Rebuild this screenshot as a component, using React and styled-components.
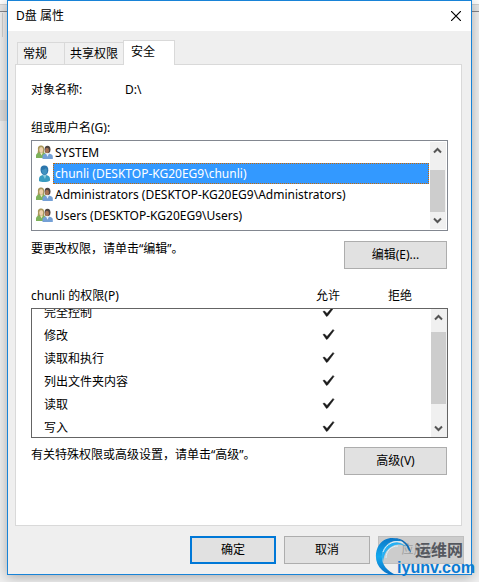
import styled, { createGlobalStyle, css } from "styled-components";

const GlobalStyle = createGlobalStyle`
  *, *::before, *::after {
    box-sizing: border-box;
  }
  body {
    margin: 0;
    background: #f0f0f0;
    color: #000;
    font-family: "Noto Sans", "Noto Sans CJK SC", sans-serif;
    font-size: 12px;
    line-height: 16px;
  }
  button {
    font: inherit;
    color: inherit;
  }
`;

const Desktop = styled.div`
  position: relative;
  padding: 0 7px 7px;
  background:
    linear-gradient(#dedede, #dedede) 0 100px / 7px 21px no-repeat,
    linear-gradient(#d0d0d0, #d0d0d0) 2px 13px / 1px 24px no-repeat,
    linear-gradient(#fff 0 4px, #d0d0d0 4px 5px, #e6e6e6 5px 11px, #84858a 11px 12px, #f0f0f0 12px);
`;

const Dialog = styled.main`
  position: relative;
  background: #efefef;
  border: 1px solid #1883d7;
  box-shadow: 0 2px 12px rgba(0, 0, 0, 0.3);
`;

const TitleBar = styled.header`
  display: flex;
  justify-content: space-between;
  align-items: center;
  height: 30px;
  padding: 0 8px;
  background: #fff;
`;

const Title = styled.h1`
  margin: 0;
  font-size: 12px;
  font-weight: 400;
`;

const CloseButton = styled.button`
  display: flex;
  width: 14px;
  height: 14px;
  padding: 2px;
  border: 0;
  background: none;
`;

const Tabs = styled.div`
  display: flex;
  align-items: flex-end;
  padding: 9px 9px 0;
`;

const Tab = styled.button`
  width: ${({ $width }) => $width}px;
  height: 22px;
  padding: 0 0 0 5px;
  border: 1px solid #d9d9d9;
  border-bottom: 0;
  border-right: 0;
  background: #f0f0f0;
  text-align: left;

  ${({ $active }) =>
    $active &&
    css`
      position: relative;
      z-index: 1;
      height: 25px;
      margin-bottom: -1px;
      padding: 0 0 2px 7px;
      border-right: 1px solid #d9d9d9;
      background: #fff;
    `}
`;

const Panel = styled.section`
  display: flex;
  flex-direction: column;
  margin: 0 9px 0 7px;
  padding: 17px 13px 50px 15px;
  border: 1px solid #d9d9d9;
  background: #fff;
`;

const ObjectLine = styled.p`
  display: flex;
  margin: 0 0 22px;
`;

const ObjectLabel = styled.span`
  width: 94px;
`;

const Label = styled.span`
  display: block;
  margin-bottom: 4px;
`;

const Box = styled.div`
  display: flex;
  overflow: hidden;
  height: ${({ $height }) => $height}px;
  padding: ${({ $inset }) => $inset || 0}px;
  border: 1px solid ${({ $color }) => $color};
`;

const UserList = styled.ul`
  flex: 1;
  margin: 0;
  padding: 0 1px 0 3px;
  list-style: none;
`;

const UserItem = styled.li`
  display: flex;
  align-items: center;
  height: 21px;
`;

const UserName = styled.span`
  flex: 1;
  height: 21px;
  padding: 2px 1px 1px;
  border: 1px solid transparent;
  white-space: nowrap;

  ${({ $selected }) =>
    $selected &&
    css`
      border: 1px dotted #cc6600;
      background: #3399ff;
      color: #fff;
    `}
`;

const IconSlot = styled.span`
  display: flex;
  width: 17px;
`;

const ScrollTrack = styled.div`
  display: flex;
  flex-direction: column;
  width: 16px;
  padding-right: 1px;
  background: #f0f0f0;
`;

const ScrollButton = styled.button`
  display: flex;
  justify-content: center;
  align-items: center;
  height: 17px;
  padding: 0;
  border: 0;
  background: none;
`;

const ScrollThumb = styled.div`
  height: ${({ $height }) => $height}px;
  margin: ${({ $before }) => $before}px 0 auto;
  background: #cdcdcd;
`;

const HintRow = styled.div`
  display: flex;
  justify-content: space-between;
  align-items: flex-start;
  padding-right: 1px;
`;

const EditRow = styled(HintRow)`
  margin: 10px 0 19px;
`;

const AdvancedRow = styled(HintRow)`
  margin-top: 9px;
`;

const PushButton = styled.button`
  width: ${({ $width }) => $width}px;
  height: 28px;
  padding: 0;
  border: 1px solid #adadad;
  background: #e1e1e1;

  ${({ $primary }) =>
    $primary &&
    css`
      border: 2px solid #0078d7;
    `}

  &:disabled {
    border-color: #bfbfbf;
    background: #cccccc;
    color: #a0a0a0;
  }
`;

const PermissionHead = styled.div`
  display: grid;
  grid-template-columns: 1fr 72px 72px 12px;
  margin-bottom: 4px;
  text-align: center;

  & > :first-child {
    text-align: left;
  }
`;

const PermissionTable = styled.table`
  flex: 1;
  align-self: flex-start;
  margin-top: -8px;
  border-collapse: collapse;
  table-layout: fixed;
`;

const PermissionName = styled.th`
  height: 23px;
  padding: 0 0 0 12px;
  font-weight: 400;
  text-align: left;
`;

const PermissionCell = styled.td`
  width: ${({ $width }) => $width}px;
  padding: 0 0 2px;
  text-align: center;

  svg {
    display: block;
    margin: 0 auto;
  }
`;

const Footer = styled.footer`
  display: flex;
  justify-content: flex-end;
  gap: 8px;
  padding: 10px 7px;
`;

const Watermark = styled.div`
  position: absolute;
  right: 4px;
  bottom: 6px;
  display: flex;
  pointer-events: none;
`;

const WatermarkText = styled.div`
  display: flex;
  flex-direction: column;
  margin-left: -18px;
  padding-top: 6px;
  font-family: "Liberation Sans", "Noto Sans CJK SC", sans-serif;
  font-size: 16px;
  line-height: 17px;
  font-weight: 700;
`;

const WatermarkName = styled.span`
  padding-left: 18px;
  color: #55585f;
`;

const WatermarkSite = styled.span`
  color: #0a7bd3;
`;

const GroupIcon = () => (
  <svg width="17" height="16" viewBox="0 0 17 16" aria-hidden="true">
    <path d="M2 5C1.500 1.500 3 .5 5 .5S8.500 1.500 8 5l.5 3.500h-7z" fill="#a8975a" />
    <ellipse cx="5.200" cy="4.700" rx="2" ry="2.700" fill="#ecd0aa" />
    <path d="M0 13V10.500C0 8.500 2 8 4 7.600l1.500 1 1.500-1c2 .4 3 1.200 3 3V13z" fill="#7db15a" />
    <path d="M4 7.600l1.500 3 1.500-3z" fill="#f3dfc0" />
    <ellipse cx="11.500" cy="4.500" rx="3" ry="3.800" fill="#4c4340" />
    <ellipse cx="11" cy="5.400" rx="2" ry="2.700" fill="#a87354" />
    <path d="M6.500 14v-2.500C6.500 9.500 8 9 10 8.500l1.500 1.200L13 8.500c2 .5 3.800 1.200 3.800 3V14z" fill="#74a0d6" />
    <path d="M10 8.500l1.500 3.300L13 8.500z" fill="#e8f1fb" />
  </svg>
);

const UserIcon = () => (
  <svg width="17" height="18" viewBox="0 0 17 18" aria-hidden="true">
    <path d="M3 16v-2c0-2.500 1.500-3.500 4-4h3c2.500.5 4 1.500 4 4v1.500C12 17.500 5 17.500 3 16z" fill="#3a9cc0" />
    <path d="M6.500 9.500h4L9 14z" fill="#8fcbdd" />
    <path d="M4.500 5C4.500 1.500 6 .5 8.500.5S12.500 2 12.300 5.500C12 8.500 10.500 10 8.500 10S4.800 8.500 4.500 5z" fill="#2b75ac" />
    <path d="M5.500 5C7 5 9 4 10 3c1 1 1.500 4 .5 5.500-1 1.500-3 1.500-4 0z" fill="#4192c0" />
  </svg>
);

const Chevron = ({ down }) => (
  <svg width="9" height="7" viewBox="0 0 9 7" aria-hidden="true">
    <path d={down ? "M1 1.500L4.500 5 8 1.500" : "M1 5.500L4.500 2 8 5.500"} fill="none" stroke="#555" strokeWidth="2" />
  </svg>
);

const Check = () => (
  <svg width="13" height="13" viewBox="0 0 13 13" role="img" aria-label="允许">
    <path d="M1 6.500L2.500 6 5 8.500 11 1.500 12 2.500 5.800 10.800 4.500 11.500z" fill="#1a1a1a" stroke="#1a1a1a" strokeWidth="0.500" strokeLinejoin="round" />
  </svg>
);

const Swirl = () => (
  <svg width="40" height="40" viewBox="0 0 40 40" aria-hidden="true">
    <defs>
      <linearGradient id="swirl" x1="0" y1="0" x2="0" y2="1">
        <stop offset="0" stopColor="#0a78c8" />
        <stop offset="0.500" stopColor="#13a9ee" />
        <stop offset="1" stopColor="#0a70c4" />
      </linearGradient>
    </defs>
    <path d="M27 5C20 0 9 1 4 9-1 17 0 28 7 34c4 4 9 5.500 14 5C12 35 6 28 7 19 8 11 13 6 20 5c3 0 5 0 7 0z" fill="url(#swirl)" />
    <path d="M36 17C35 8 28 2 18 2c7 1 13 5 15 11z" fill="#0b6cb8" />
    <path d="M33 13C28 6 19 4 12 9c-5 4-6 11-4 17C9 19 11 14 16 11c6-4 13-3 17 2z" fill="#27b0f3" />
    <path d="M11 22c0-7 5-12 12-12" fill="none" stroke="#d8f1fd" />
    <path d="M8 16C11 8 20 3 28 7" fill="none" stroke="#d8f1fd" />
  </svg>
);

const users = [
  { name: "SYSTEM", group: true },
  { name: "chunli (DESKTOP-KG20EG9\\chunli)", selected: true },
  { name: "Administrators (DESKTOP-KG20EG9\\Administrators)", group: true },
  { name: "Users (DESKTOP-KG20EG9\\Users)", group: true },
];

const permissions = ["完全控制", "修改", "读取和执行", "列出文件夹内容", "读取", "写入"];

const Scrollbar = ({ before, height }) => (
  <ScrollTrack>
    <ScrollButton aria-label="向上滚动">
      <Chevron />
    </ScrollButton>
    <ScrollThumb $before={before} $height={height} />
    <ScrollButton aria-label="向下滚动">
      <Chevron down />
    </ScrollButton>
  </ScrollTrack>
);

const App = () => {
  return (
    <>
      <GlobalStyle />
      <Desktop>
        <Dialog>
          <TitleBar>
            <Title>D盘 属性</Title>
            <CloseButton aria-label="关闭">
              <svg width="10" height="10" viewBox="0 0 10 10">
                <path d="M0 0L10 10M10 0L0 10" stroke="#000" strokeWidth="1.200" />
              </svg>
            </CloseButton>
          </TitleBar>
          <Tabs role="tablist">
            <Tab role="tab" $width={47}>常规</Tab>
            <Tab role="tab" $width={59}>共享权限</Tab>
            <Tab role="tab" aria-selected="true" $width={52} $active>安全</Tab>
          </Tabs>
          <Panel>
            <ObjectLine>
              <ObjectLabel>对象名称:</ObjectLabel>
              <span>D:\</span>
            </ObjectLine>

            <Label id="users-label">组或用户名(G):</Label>
            <Box $height={91} $inset={1} $color="#828790">
              <UserList role="listbox" aria-labelledby="users-label">
                {users.map((user) => (
                  <UserItem key={user.name} role="option" aria-selected={!!user.selected}>
                    <IconSlot>{user.group ? <GroupIcon /> : <UserIcon />}</IconSlot>
                    <UserName $selected={user.selected}>{user.name}</UserName>
                  </UserItem>
                ))}
              </UserList>
              <Scrollbar before={11} height={42} />
            </Box>
            <EditRow>
              <span>要更改权限，请单击“编辑”。</span>
              <PushButton $width={103}>编辑(E)...</PushButton>
            </EditRow>

            <PermissionHead>
              <span id="permissions-label">chunli 的权限(P)</span>
              <span>允许</span>
              <span>拒绝</span>
            </PermissionHead>
            <Box $height={130} $color="#646464">
              <PermissionTable aria-labelledby="permissions-label">
                <tbody>
                  {permissions.map((name) => (
                    <tr key={name}>
                      <PermissionName scope="row">{name}</PermissionName>
                      <PermissionCell $width={72}>
                        <Check />
                      </PermissionCell>
                      <PermissionCell $width={67} />
                    </tr>
                  ))}
                </tbody>
              </PermissionTable>
              <Scrollbar before={6} height={72} />
            </Box>
            <AdvancedRow>
              <span>有关特殊权限或高级设置，请单击“高级”。</span>
              <PushButton $width={103}>高级(V)</PushButton>
            </AdvancedRow>
          </Panel>
          <Footer>
            <PushButton $width={86} $primary>确定</PushButton>
            <PushButton $width={86}>取消</PushButton>
            <PushButton $width={86} disabled>应用(A)</PushButton>
          </Footer>
        </Dialog>
        <Watermark>
          <Swirl />
          <WatermarkText>
            <WatermarkName>运维网</WatermarkName>
            <WatermarkSite>iyunv.com</WatermarkSite>
          </WatermarkText>
        </Watermark>
      </Desktop>
    </>
  );
};

export default App;
